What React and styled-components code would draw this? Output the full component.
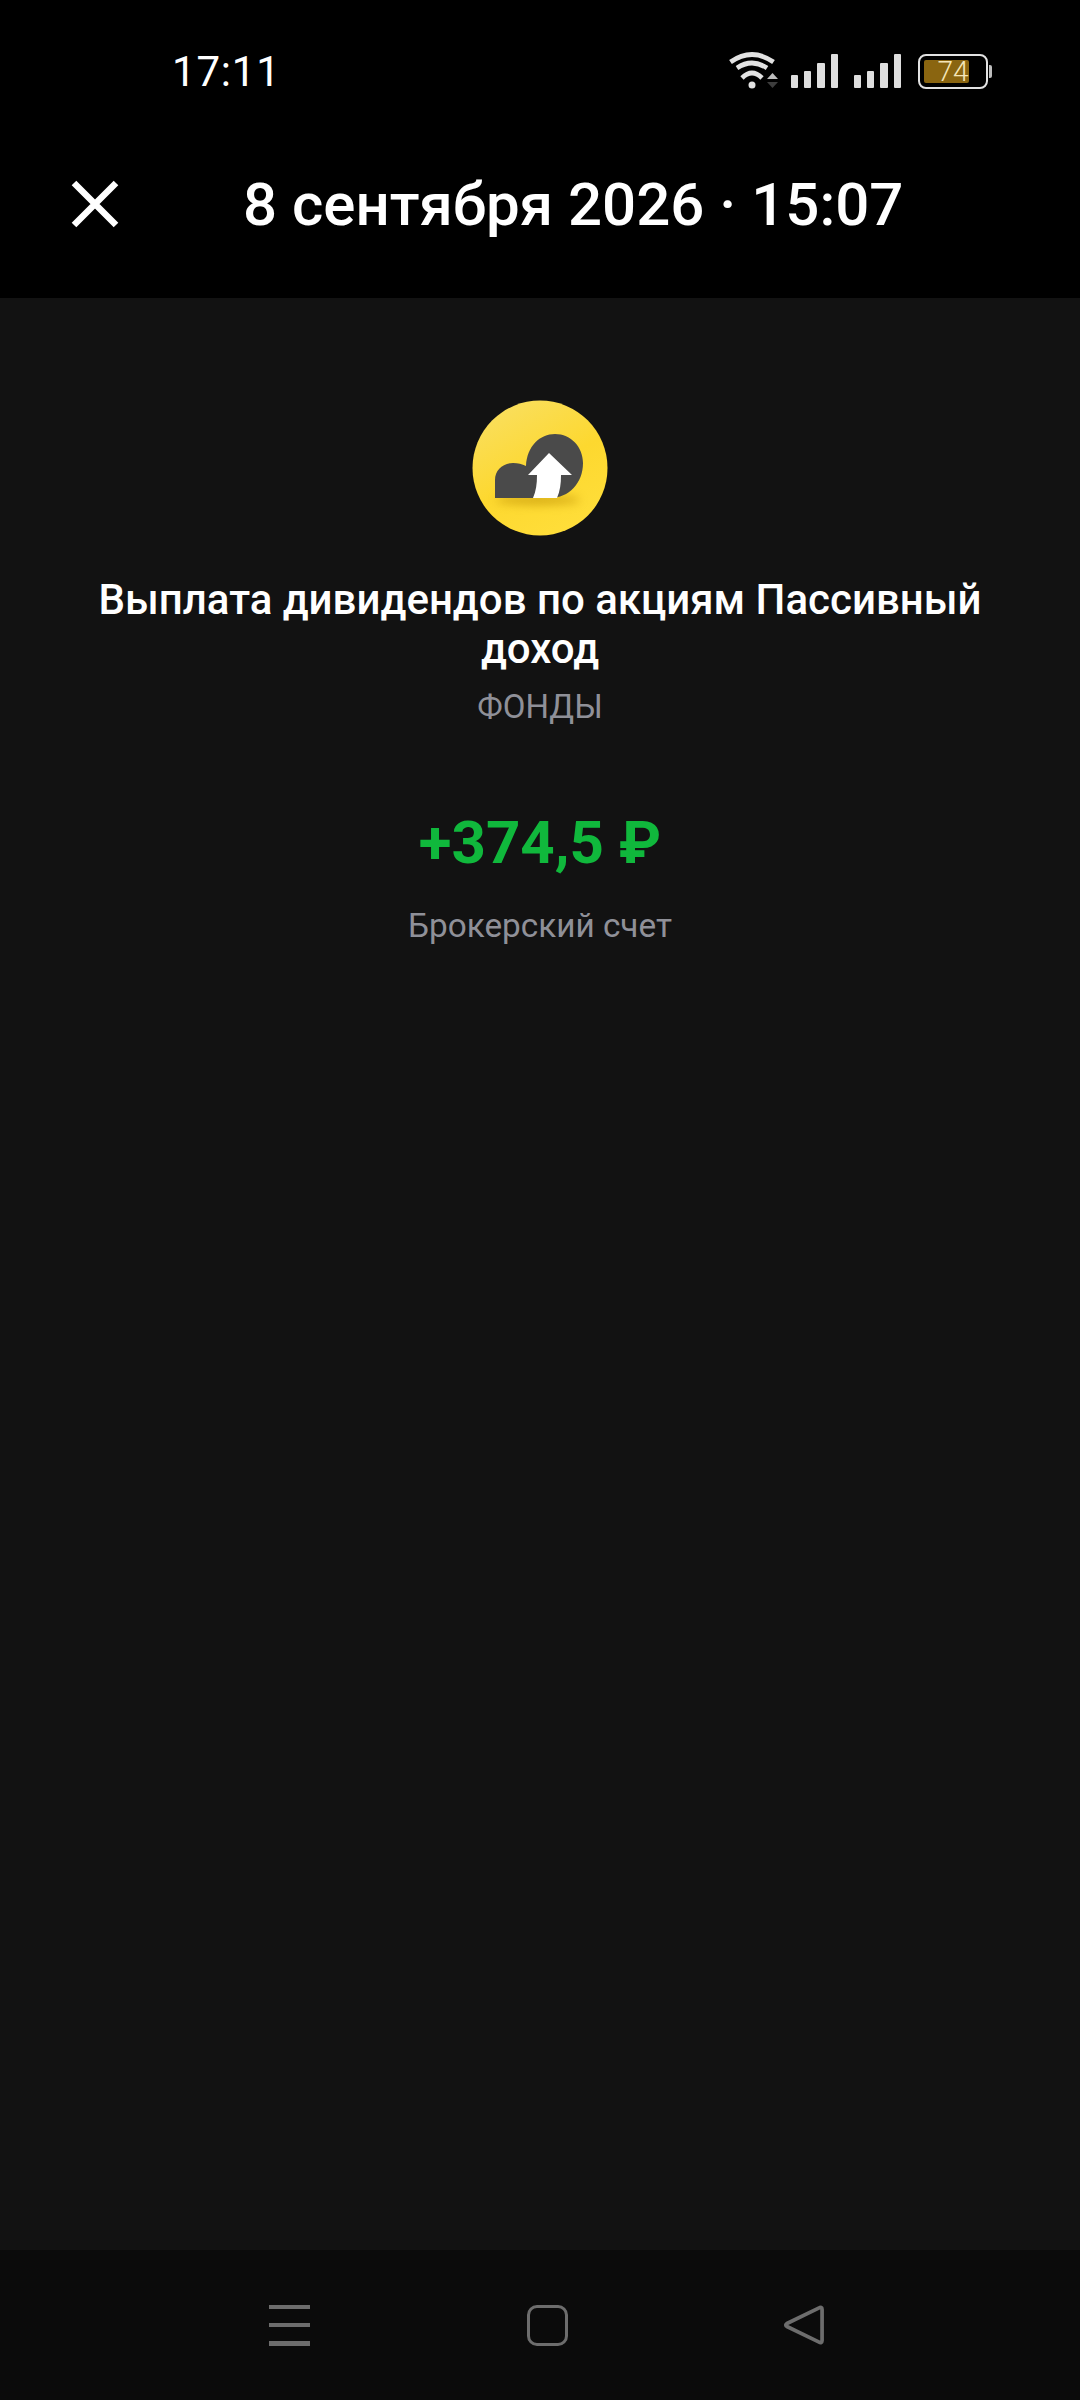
import React from 'react'
import styled, { createGlobalStyle } from 'styled-components'

const GlobalStyle = createGlobalStyle`
  html, body {
    margin: 0;
    padding: 0;
    background: #000;
  }
  * {
    box-sizing: border-box;
  }
`

function WifiIcon() {
  return (
    <svg width='50' height='38' viewBox='0 0 50 38' fill='none'>
      <path d='M1.500 10Q23 -5 44.500 10' stroke='#e2e2e2' strokeWidth='4.700' />
      <path d='M8 16Q23 6 38 16' stroke='#e2e2e2' strokeWidth='4.700' />
      <path d='M13 26Q23 16 33 26' stroke='#e2e2e2' strokeWidth='4.700' />
      <circle cx='23' cy='33' r='3.500' fill='#e2e2e2' />
      <path d='M43.500 21L49 27H38Z' fill='#bdbdbd' />
      <path d='M38 30H49L43.500 36Z' fill='#3d3d3d' />
    </svg>
  )
}

function SignalIcon() {
  return (
    <SignalBars>
      {[13, 17, 25, 34].map((height, index) => (
        <SignalBar key={index} style={{ height }} />
      ))}
    </SignalBars>
  )
}

function CloseIcon() {
  return (
    <svg width='48' height='48' viewBox='0 0 48 48' fill='none'>
      <path d='M3 3L45 45M45 3L3 45' stroke='#fff' strokeWidth='6.500' />
    </svg>
  )
}

function FundIcon() {
  return (
    <svg width='136' height='136' viewBox='0 0 136 136'>
      <defs>
        <linearGradient id='fundBg' x1='0.15' y1='0' x2='0.7' y2='1'>
          <stop offset='0' stopColor='#f9df62' />
          <stop offset='0.55' stopColor='#fdd82f' />
          <stop offset='1' stopColor='#ffde3a' />
        </linearGradient>
        <filter id='fundShadow' x='-30%' y='-100%' width='160%' height='300%'>
          <feGaussianBlur stdDeviation='5' />
        </filter>
      </defs>
      <circle cx='68' cy='68' r='67.500' fill='url(#fundBg)' />
      <ellipse cx='66' cy='100' rx='42' ry='5' fill='#b98a00' opacity='0.55' filter='url(#fundShadow)' />
      <path
        d='M23 98V80C23 70 31 63 41 63C46 63 50 64 54 66C55 46 68 34 83 34C99 34 111 47 111 63C111 83 97 98 78 98Z'
        fill='#4a4a4a'
      />
      <path
        d='M61 98C64 91 65 84 65 75H56L77 53L100 75H89C89 84 88 91 85 98Z'
        fill='#fff'
      />
    </svg>
  )
}

function App() {
  return (
    <Screen>
      <GlobalStyle />
      <Header>
        <StatusBar>
          <Clock>17:11</Clock>
          <StatusIcons>
            <WifiIcon />
            <SignalIcon />
            <SignalIcon />
            <Battery>
              <BatteryFill />
              <BatteryLevel>74</BatteryLevel>
              <BatteryCap />
            </Battery>
          </StatusIcons>
        </StatusBar>
        <TitleBar>
          <CloseButton>
            <CloseIcon />
          </CloseButton>
          <DateTitle>8 сентября 2026 · 15:07</DateTitle>
        </TitleBar>
      </Header>
      <Content>
        <FundIcon />
        <OperationTitle>Выплата дивидендов по акциям Пассивный доход</OperationTitle>
        <Category>ФОНДЫ</Category>
        <Amount>+374,5 ₽</Amount>
        <Account>Брокерский счет</Account>
      </Content>
      <NavBar>
        <MenuLines>
          <MenuLine />
          <MenuLine />
          <MenuLine />
        </MenuLines>
        <HomeSquare />
        <svg width='41' height='42' viewBox='0 0 42 42' fill='none'>
          <path
            d='M39 5V37C39 39 37.500 39.500 36 38.600L3 22.500C1.500 21.500 1.500 20.500 3 19.500L36 3.400C37.500 2.500 39 3 39 5Z'
            stroke='#6d6d6d'
            strokeWidth='3.800'
            strokeLinejoin='round'
          />
        </svg>
      </NavBar>
    </Screen>
  )
}

const Screen = styled.div`
  width: 1080px;
  height: 2400px;
  display: flex;
  flex-direction: column;
  background: #121212;
  font-family: Roboto, 'Noto Sans', sans-serif;
  overflow: hidden;
`
const Header = styled.div`
  height: 298px;
  background: #000;
  color: #fff;
`
const StatusBar = styled.div`
  height: 142px;
  display: flex;
  align-items: center;
  justify-content: space-between;
  padding: 0 92px 0 172px;
`
const Clock = styled.span`
  font-size: 42px;
  letter-spacing: 0.8px;
  color: #fff;
`
const StatusIcons = styled.div`
  display: flex;
  align-items: center;
  gap: 16px;
`
const SignalBars = styled.div`
  display: flex;
  align-items: flex-end;
  gap: 6px;
  height: 34px;
  margin-left: -4px;

  & + & {
    margin-left: 0;
  }
`
const SignalBar = styled.div`
  width: 7.3px;
  background: #dedede;
  border-radius: 1px;
`
const Battery = styled.div`
  position: relative;
  width: 70px;
  height: 35px;
  margin-left: 1px;
  border: 2px solid #e2e2e2;
  border-radius: 8px;
  padding: 4px;
`
const BatteryFill = styled.div`
  width: 78%;
  height: 100%;
  background: #8a6510;
  border-radius: 2px;
`
const BatteryLevel = styled.span`
  position: absolute;
  inset: 0;
  display: flex;
  align-items: center;
  justify-content: center;
  font-size: 28px;
  font-weight: 300;
  color: #f5e6b8;
`
const BatteryCap = styled.div`
  position: absolute;
  right: -6px;
  top: 9px;
  width: 3px;
  height: 13px;
  background: #bdbdbd;
  border-radius: 0 2px 2px 0;
`
const TitleBar = styled.div`
  display: flex;
  align-items: center;
  height: 124px;
  padding-left: 71px;
`
const CloseButton = styled.div`
  display: flex;
  width: 48px;
  height: 48px;
`
const DateTitle = styled.h1`
  margin: 0 0 0 124px;
  font-size: 60px;
  font-weight: 500;
  white-space: nowrap;
`
const Content = styled.div`
  flex: 1;
  display: flex;
  flex-direction: column;
  align-items: center;
  padding: 102px 60px 0;
  text-align: center;
`
const OperationTitle = styled.h2`
  margin: 39px 0 0;
  font-size: 42px;
  line-height: 49px;
  font-weight: 500;
  color: #fff;
`
const Category = styled.div`
  margin-top: 12px;
  font-size: 33px;
  line-height: 44px;
  color: #8f9098;
`
const Amount = styled.div`
  margin-top: 79px;
  font-size: 60px;
  line-height: 70px;
  font-weight: 700;
  color: #10b83c;
`
const Account = styled.div`
  margin-top: 26px;
  font-size: 33.3px;
  line-height: 44px;
  color: #8f9098;
`
const NavBar = styled.div`
  height: 150px;
  display: flex;
  align-items: center;
  justify-content: space-between;
  padding: 0 255px 0 269px;
  background: #0b0b0b;
`
const MenuLines = styled.div`
  width: 41px;
  height: 41px;
  display: flex;
  flex-direction: column;
  justify-content: space-between;
`
const MenuLine = styled.div`
  height: 4.5px;
  background: #6d6d6d;
`
const HomeSquare = styled.div`
  width: 41px;
  height: 41px;
  border: 3.8px solid #6d6d6d;
  border-radius: 10px;
`

export default App
